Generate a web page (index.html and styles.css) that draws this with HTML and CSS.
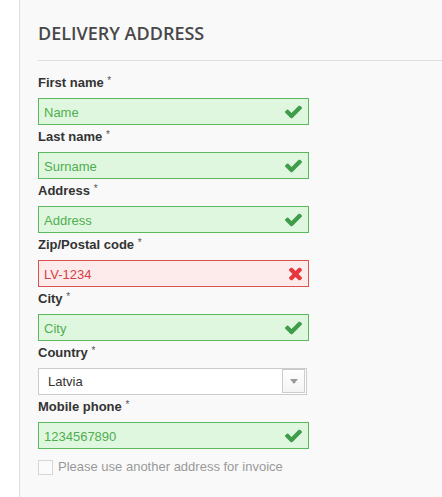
FILE: index.html
```html
<!DOCTYPE html>
<html lang="en">
<head>
<meta charset="utf-8">
<title>Delivery address</title>
<link rel="stylesheet" href="styles.css">
</head>
<body>
<div class="panel">
  <h2 class="title">DELIVERY ADDRESS</h2>
  <form class="form">
    <div class="field">
      <label class="label">First name <span class="req">*</span></label>
      <div class="control ok">
        <input class="input" type="text" value="Name">
        <svg class="icon check" viewBox="121 334 1550 1188" width="17" height="13"><path d="M1671 566q0 40-28 68l-724 724-136 136q-28 28-68 28t-68-28l-136-136-362-362q-28-28-28-68t28-68l136-136q28-28 68-28t68 28l294 295 656-657q28-28 68-28t68 28l136 136q28 28 28 68z"/></svg>
      </div>
    </div>
    <div class="field">
      <label class="label">Last name <span class="req">*</span></label>
      <div class="control ok">
        <input class="input" type="text" value="Surname">
        <svg class="icon check" viewBox="121 334 1550 1188" width="17" height="13"><path d="M1671 566q0 40-28 68l-724 724-136 136q-28 28-68 28t-68-28l-136-136-362-362q-28-28-28-68t28-68l136-136q28-28 68-28t68 28l294 295 656-657q28-28 68-28t68 28l136 136q28 28 28 68z"/></svg>
      </div>
    </div>
    <div class="field">
      <label class="label">Address <span class="req">*</span></label>
      <div class="control ok">
        <input class="input" type="text" value="Address">
        <svg class="icon check" viewBox="121 334 1550 1188" width="17" height="13"><path d="M1671 566q0 40-28 68l-724 724-136 136q-28 28-68 28t-68-28l-136-136-362-362q-28-28-28-68t28-68l136-136q28-28 68-28t68 28l294 295 656-657q28-28 68-28t68 28l136 136q28 28 28 68z"/></svg>
      </div>
    </div>
    <div class="field">
      <label class="label">Zip/Postal code <span class="req">*</span></label>
      <div class="control err">
        <input class="input" type="text" value="LV-1234">
        <svg class="icon cross" viewBox="302 366 1188 1188" width="13" height="13"><path d="M1490 1322q0 40-28 68l-136 136q-28 28-68 28t-68-28l-294-294-294 294q-28 28-68 28t-68-28l-136-136q-28-28-28-68t28-68l294-294-294-294q-28-28-28-68t28-68l136-136q28-28 68-28t68 28l294 294 294-294q28-28 68-28t68 28l136 136q28 28 28 68t-28 68l-294 294 294 294q28 28 28 68z"/></svg>
      </div>
    </div>
    <div class="field">
      <label class="label">City <span class="req">*</span></label>
      <div class="control ok">
        <input class="input" type="text" value="City">
        <svg class="icon check" viewBox="121 334 1550 1188" width="17" height="13"><path d="M1671 566q0 40-28 68l-724 724-136 136q-28 28-68 28t-68-28l-136-136-362-362q-28-28-28-68t28-68l136-136q28-28 68-28t68 28l294 295 656-657q28-28 68-28t68 28l136 136q28 28 28 68z"/></svg>
      </div>
    </div>
    <div class="field">
      <label class="label">Country <span class="req">*</span></label>
      <div class="select">
        <span class="select-value">Latvia</span>
        <span class="select-arrow"><span class="tri"></span></span>
      </div>
    </div>
    <div class="field">
      <label class="label">Mobile phone <span class="req">*</span></label>
      <div class="control ok">
        <input class="input" type="text" value="1234567890">
        <svg class="icon check" viewBox="121 334 1550 1188" width="17" height="13"><path d="M1671 566q0 40-28 68l-724 724-136 136q-28 28-68 28t-68-28l-136-136-362-362q-28-28-28-68t28-68l136-136q28-28 68-28t68 28l294 295 656-657q28-28 68-28t68 28l136 136q28 28 28 68z"/></svg>
      </div>
    </div>
    <label class="checkbox-row">
      <span class="checkbox"></span>
      <span class="checkbox-text">Please use another address for invoice</span>
    </label>
  </form>
</div>
</body>
</html>
```

FILE: styles.css
```css
html, body {
  margin: 0;
  padding: 0;
  background: #ffffff;
}

body {
  font-family: "Liberation Sans", Arial, sans-serif;
  font-size: 13px;
  color: #333333;
}

.panel {
  margin-left: 19px;
  border-left: 1px solid #dddddd;
  background: #f9f9f9;
  padding-left: 18px;
  min-height: 497px;
  box-sizing: border-box;
}

.title {
  margin: 0;
  padding: 21px 0 15px;
  font-family: "Open Sans", sans-serif;
  font-weight: 600;
  font-size: 18px;
  line-height: 24px;
  color: #484848;
  border-bottom: 1px solid #dddddd;
}

.form {
  margin: 10px 0 0;
  width: 271px;
}

.label {
  display: block;
  padding: 3px 0 6px;
  line-height: 18px;
  font-weight: bold;
  font-size: 13px;
  color: #333333;
}

.req {
  font-size: 10px;
  line-height: 1;
  font-weight: normal;
  color: #555555;
  vertical-align: 3px;
}

.control {
  position: relative;
}

.input {
  display: block;
  width: 100%;
  height: 27px;
  box-sizing: border-box;
  margin: 0;
  padding: 1px 30px 0 5px;
  font-family: "Liberation Sans", Arial, sans-serif;
  font-size: 13px;
  border: 1px solid #cccccc;
  border-radius: 0;
  outline: none;
}

.ok .input {
  background: #dff7df;
  border-color: #5cb85c;
  color: #4fae4f;
}

.err .input {
  background: #fdeaeb;
  border-color: #d9534f;
  color: #d43f46;
}

.icon {
  position: absolute;
  top: 50%;
  transform: translateY(-50%);
}

.check {
  right: 7px;
  fill: #3f9c48;
}

.cross {
  right: 7px;
  fill: #e8363d;
}

.select {
  display: flex;
  align-items: flex-start;
  justify-content: space-between;
  width: 269px;
  height: 27px;
  box-sizing: border-box;
  border: 1px solid #cccccc;
  background: #ffffff;
  padding: 0 1px 0 9px;
}

.select-value {
  line-height: 25px;
  color: #333333;
}

.select-arrow {
  display: flex;
  align-items: center;
  justify-content: center;
  width: 23px;
  height: 24px;
  box-sizing: border-box;
  border: 1px solid #cccccc;
  background: linear-gradient(#ffffff, #f4f4f4);
}

.tri {
  width: 0;
  height: 0;
  border-left: 4px solid transparent;
  border-right: 4px solid transparent;
  border-top: 5px solid #9a9a9a;
}

.checkbox-row {
  display: flex;
  align-items: center;
  gap: 5px;
  margin-top: 10px;
}

.checkbox {
  width: 15px;
  height: 15px;
  box-sizing: border-box;
  border: 1px solid #d6d6d6;
  background: #fbfbfb;
}

.checkbox-text {
  color: #999999;
  font-size: 13px;
  line-height: 16px;
}
```
